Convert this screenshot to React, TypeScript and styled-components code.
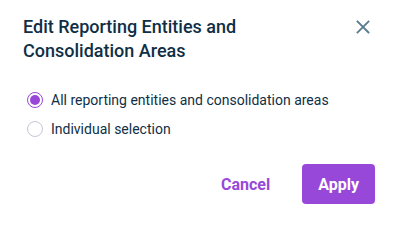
import React, { useState } from "react";
import styled, { createGlobalStyle } from "styled-components";

const PURPLE = "#9848d8";
const NAVY = "#0f2f46";

const GlobalStyle = createGlobalStyle`
  html, body {
    margin: 0;
    padding: 0;
    background: #ffffff;
  }
  body {
    font-family: Roboto, "Liberation Sans", sans-serif;
    -webkit-font-smoothing: antialiased;
  }
`;

const Dialog = styled.div`
  width: 396px;
  height: 220px;
  box-sizing: border-box;
  padding: 15px 21px 0 23px;
  display: flex;
  flex-direction: column;
  background: #ffffff;
`;

const Header = styled.div`
  display: flex;
  align-items: flex-start;
  justify-content: space-between;
`;

const Title = styled.h2`
  margin: 0;
  max-width: 300px;
  font-size: 18px;
  line-height: 24px;
  font-weight: 500;
  color: ${NAVY};
`;

const CloseButton = styled.button`
  width: 24px;
  height: 24px;
  padding: 0;
  border: none;
  background: transparent;
  color: #5b7b8e;
  display: flex;
  align-items: center;
  justify-content: center;
  cursor: pointer;
`;

const Options = styled.div`
  margin-top: 25px;
  display: flex;
  flex-direction: column;
  gap: 5px;
`;

const OptionRow = styled.label`
  display: flex;
  align-items: center;
  gap: 8px;
  height: 24px;
  padding-left: 4px;
  font-size: 14px;
  color: ${NAVY};
  cursor: pointer;
`;

const RadioCircle = styled.span<{ $checked: boolean }>`
  width: 16px;
  height: 16px;
  box-sizing: border-box;
  border-radius: 50%;
  border: ${(p) => (p.$checked ? `1.5px solid ${PURPLE}` : "1px solid #c7c4d8")};
  display: flex;
  align-items: center;
  justify-content: center;
  flex-shrink: 0;

  &::after {
    content: "";
    width: 10px;
    height: 10px;
    border-radius: 50%;
    background: ${PURPLE};
    display: ${(p) => (p.$checked ? "block" : "none")};
  }
`;

const Footer = styled.div`
  margin-top: 23px;
  display: flex;
  justify-content: flex-end;
  gap: 16px;
`;

const Button = styled.button<{ $primary?: boolean }>`
  height: 40px;
  padding: 0 16px;
  border: none;
  border-radius: 4px;
  font-family: inherit;
  font-size: 16px;
  font-weight: 700;
  background: ${(p) => (p.$primary ? PURPLE : "transparent")};
  color: ${(p) => (p.$primary ? "#ffffff" : PURPLE)};
  cursor: pointer;
`;

const options = [
  { id: "all", label: "All reporting entities and consolidation areas" },
  { id: "individual", label: "Individual selection" },
];

export default function App() {
  const [selected, setSelected] = useState("all");

  return (
    <>
      <GlobalStyle />
      <Dialog>
        <Header>
          <Title>Edit Reporting Entities and Consolidation Areas</Title>
          <CloseButton aria-label="Close">
            <svg width="24" height="24" viewBox="0 0 24 24" fill="none">
              <path
                d="M6.5 6.5l11 11M17.5 6.5l-11 11"
                stroke="currentColor"
                strokeWidth="1.8"
                strokeLinecap="square"
              />
            </svg>
          </CloseButton>
        </Header>
        <Options>
          {options.map((o) => (
            <OptionRow key={o.id} onClick={() => setSelected(o.id)}>
              <RadioCircle $checked={selected === o.id} />
              {o.label}
            </OptionRow>
          ))}
        </Options>
        <Footer>
          <Button>Cancel</Button>
          <Button $primary>Apply</Button>
        </Footer>
      </Dialog>
    </>
  );
}
